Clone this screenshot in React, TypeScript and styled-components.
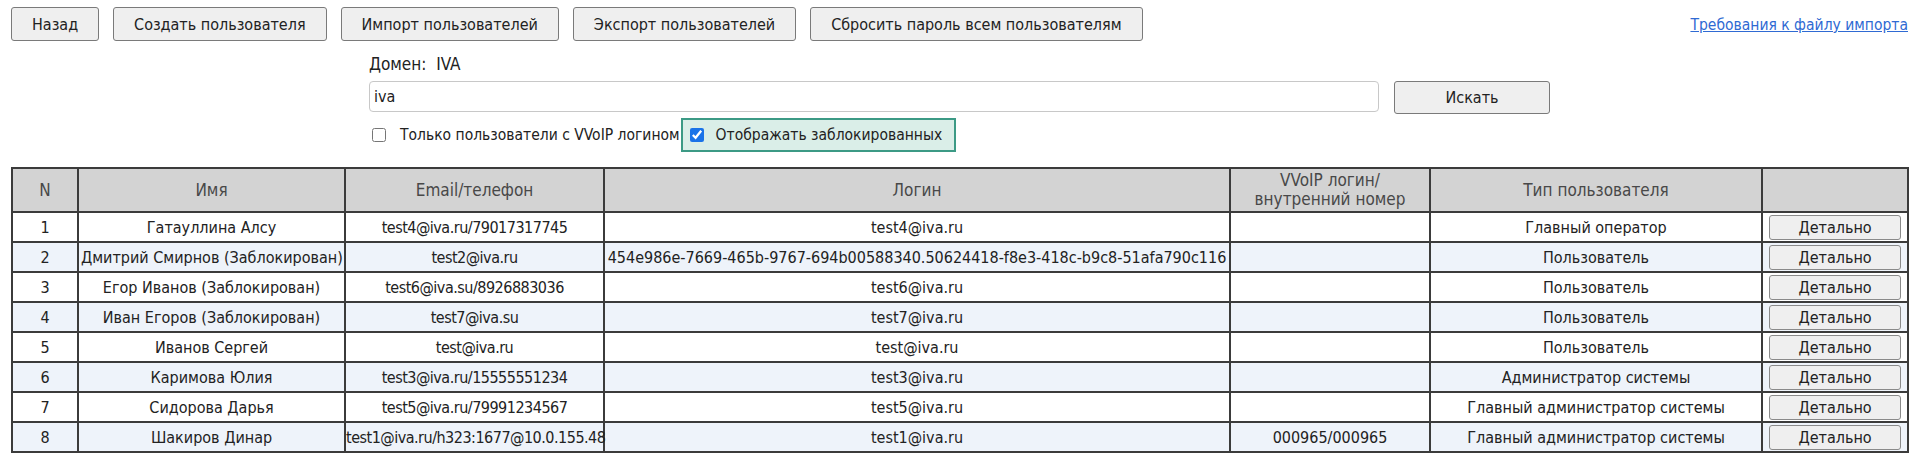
import styled, { createGlobalStyle } from 'styled-components'

type UserRow = {
	id: number
	name: string
	contact: string
	login: string
	vvoip: string
	role: string
}

const users: UserRow[] = [
	{ id: 1, name: 'Гатауллина Алсу', contact: 'test4@iva.ru/79017317745', login: 'test4@iva.ru', vvoip: '', role: 'Главный оператор' },
	{
		id: 2,
		name: 'Дмитрий Смирнов (Заблокирован)',
		contact: 'test2@iva.ru',
		login: '454e986e-7669-465b-9767-694b00588340.50624418-f8e3-418c-b9c8-51afa790c116',
		vvoip: '',
		role: 'Пользователь'
	},
	{ id: 3, name: 'Егор Иванов (Заблокирован)', contact: 'test6@iva.su/8926883036', login: 'test6@iva.ru', vvoip: '', role: 'Пользователь' },
	{ id: 4, name: 'Иван Егоров (Заблокирован)', contact: 'test7@iva.su', login: 'test7@iva.ru', vvoip: '', role: 'Пользователь' },
	{ id: 5, name: 'Иванов Сергей', contact: 'test@iva.ru', login: 'test@iva.ru', vvoip: '', role: 'Пользователь' },
	{ id: 6, name: 'Каримова Юлия', contact: 'test3@iva.ru/15555551234', login: 'test3@iva.ru', vvoip: '', role: 'Администратор системы' },
	{ id: 7, name: 'Сидорова Дарья', contact: 'test5@iva.ru/79991234567', login: 'test5@iva.ru', vvoip: '', role: 'Главный администратор системы' },
	{
		id: 8,
		name: 'Шакиров Динар',
		contact: 'test1@iva.ru/h323:1677@10.0.155.48',
		login: 'test1@iva.ru',
		vvoip: '000965/000965',
		role: 'Главный администратор системы'
	}
]

// ширины колонок сняты со скриншота
const columns = [66, 267, 259, 626, 200, 332, 146]

export default function App() {
	return (
		<>
			<PageGlobal />
			<Page>
				<TopBar>
					<Actions>
						<ActionButton>Назад</ActionButton>
						<ActionButton>Создать пользователя</ActionButton>
						<ActionButton>Импорт пользователей</ActionButton>
						<ActionButton>Экспорт пользователей</ActionButton>
						<ActionButton>Сбросить пароль всем пользователям</ActionButton>
					</Actions>
					<ImportLink href='#'>Требования к файлу импорта</ImportLink>
				</TopBar>

				<SearchBlock>
					<DomainLabel>Домен:&nbsp; IVA</DomainLabel>
					<SearchRow>
						<SearchInput defaultValue='iva' />
						<SearchButton>Искать</SearchButton>
					</SearchRow>
					<FilterRow>
						<FilterOption>
							<Check type='checkbox' />
							<span>Только пользователи с VVoIP логином</span>
						</FilterOption>
						<FilterOption $active>
							<Check type='checkbox' defaultChecked />
							<span>Отображать заблокированных</span>
						</FilterOption>
					</FilterRow>
				</SearchBlock>

				<UsersTable>
					<colgroup>
						{columns.map((w, i) => (
							<col key={i} width={w} />
						))}
					</colgroup>
					<thead>
						<tr>
							<HeadCell>N</HeadCell>
							<HeadCell>Имя</HeadCell>
							<HeadCell>Email/телефон</HeadCell>
							<HeadCell>Логин</HeadCell>
							<HeadCell>
								VVoIP логин/
								<br />
								внутренний номер
							</HeadCell>
							<HeadCell>Тип пользователя</HeadCell>
							<HeadCell />
						</tr>
					</thead>
					<tbody>
						{users.map((u) => (
							<BodyRow key={u.id}>
								<Cell>{u.id}</Cell>
								<Cell>{u.name}</Cell>
								<Cell $tight>{u.contact}</Cell>
								<Cell>{u.login}</Cell>
								<Cell>{u.vvoip}</Cell>
								<Cell>{u.role}</Cell>
								<ButtonCell>
									<DetailButton>Детально</DetailButton>
								</ButtonCell>
							</BodyRow>
						))}
					</tbody>
				</UsersTable>
			</Page>
		</>
	)
}

const PageGlobal = createGlobalStyle`
	body {
		margin: 0;
		background: #ffffff;
		color: #222222;
		font-family: 'DejaVu Sans Condensed', 'DejaVu Sans', sans-serif;
		font-stretch: condensed;
		font-size: 16px;
	}
`

const Page = styled.div`
	padding: 7px 12px 12px 11px;
`

const TopBar = styled.div`
	display: flex;
	align-items: flex-start;
	justify-content: space-between;
`

const Actions = styled.div`
	display: flex;
	gap: 14px;
`

const ActionButton = styled.button`
	height: 34px;
	padding: 0 20px;
	font: inherit;
	color: #222222;
	background: #efefef;
	border: 1px solid #7a7a7a;
	border-radius: 3px;
`

const ImportLink = styled.a`
	margin-top: 9px;
	font-size: 15.5px;
	color: #2f6ad3;
	text-decoration: underline;
`

const SearchBlock = styled.div`
	width: 1181px;
	margin: 11px auto 0;
`

const DomainLabel = styled.div`
	font-size: 17px;
	line-height: 24px;
	color: #222222;
`

const SearchRow = styled.div`
	display: flex;
	align-items: flex-start;
	gap: 15px;
	margin-top: 5px;
`

const SearchInput = styled.input`
	flex: 1;
	height: 31px;
	box-sizing: border-box;
	padding: 0 4px;
	font: inherit;
	color: #222222;
	border: 1px solid #c8c8c8;
	border-radius: 4px;
	outline: none;
`

const SearchButton = styled(ActionButton)`
	width: 156px;
	height: 33px;
`

const FilterRow = styled.div`
	display: flex;
	align-items: center;
	margin-top: 4px;
	font-size: 15.5px;
`

const FilterOption = styled.label<{ $active?: boolean }>`
	display: flex;
	align-items: center;
	gap: ${(p) => (p.$active ? '12px' : '14px')};
	height: 34px;
	box-sizing: border-box;
	padding: 0 ${(p) => (p.$active ? '12px 0 4px' : '1px 0 0')};
	border: 2px solid ${(p) => (p.$active ? '#3c9a85' : 'transparent')};
	border-width: ${(p) => (p.$active ? '2px' : '0')};
	background: ${(p) => (p.$active ? '#daeee8' : 'transparent')};
	color: #222222;
`

const Check = styled.input`
	width: 14px;
	height: 14px;
	margin: 0 0 0 3px;
	accent-color: #1a73e8;
`

const UsersTable = styled.table`
	width: 100%;
	margin-top: 15px;
	border-collapse: collapse;
	table-layout: fixed;
	border: 2px solid #3b3b3b;
`

const HeadCell = styled.th`
	height: 42px;
	padding: 0 4px;
	background: #d3d3d3;
	color: #484848;
	font-weight: normal;
	font-size: 17px;
	line-height: 19px;
	border: 2px solid #3b3b3b;
`

const BodyRow = styled.tr`
	&:nth-child(even) {
		background: #eef3fa;
	}
`

const Cell = styled.td<{ $tight?: boolean }>`
	height: 28px;
	padding: 0 ${(p) => (p.$tight ? '0' : '2px')};
	letter-spacing: ${(p) => (p.$tight ? '-0.5px' : 'normal')};
	text-align: center;
	white-space: nowrap;
	border: 2px solid #3b3b3b;
`

const ButtonCell = styled(Cell)`
	padding: 0 6px;
`

const DetailButton = styled.button`
	width: 100%;
	height: 25px;
	font: inherit;
	color: #222222;
	background: #efefef;
	border: 1px solid #8a8a8a;
	border-radius: 3px;
`
